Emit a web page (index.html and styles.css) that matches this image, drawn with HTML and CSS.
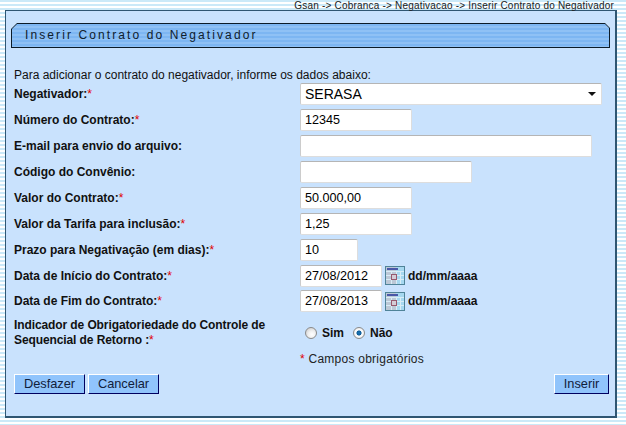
FILE: index.html
```html
<!DOCTYPE html>
<html lang="pt">
<head>
    <meta charset="UTF-8">
    <title>Inserir Contrato do Negativador</title>
    <link rel="stylesheet" href="styles.css">
</head>
<body>
<div class="trail">Gsan -&gt; Cobranca -&gt; Negativacao -&gt; Inserir Contrato do Negativador</div>
<div class="panel">
    <div class="title-bar"><div class="title-text">Inserir Contrato do Negativador</div></div>
    <p class="intro">Para adicionar o contrato do negativador, informe os dados abaixo:</p>
    <form class="form">
        <div class="row">
            <label>Negativador:<span class="req">*</span></label>
            <div class="field fake-select"><span>SERASA</span><i class="arrow"></i></div>
        </div>
        <div class="row">
            <label>Número do Contrato:<span class="req">*</span></label>
            <input class="field w112" type="text" value="12345">
        </div>
        <div class="row">
            <label>E-mail para envio do arquivo:</label>
            <input class="field w292" type="text">
        </div>
        <div class="row">
            <label>Código do Convênio:</label>
            <input class="field w172" type="text">
        </div>
        <div class="row">
            <label>Valor do Contrato:<span class="req">*</span></label>
            <input class="field w112" type="text" value="50.000,00">
        </div>
        <div class="row">
            <label>Valor da Tarifa para inclusão:<span class="req">*</span></label>
            <input class="field w112" type="text" value="1,25">
        </div>
        <div class="row">
            <label>Prazo para Negativação (em dias):<span class="req">*</span></label>
            <input class="field w58" type="text" value="10">
        </div>
        <div class="row">
            <label>Data de Início do Contrato:<span class="req">*</span></label>
            <input class="field w82" type="text" value="27/08/2012">
            <svg class="cal" width="20" height="19" viewBox="0 0 20 19">
                <rect width="20" height="19" fill="#4f8398"/>
                <rect x="1" y="1" width="18" height="17" fill="#a6d8f0"/>
                <rect x="1" y="1" width="10" height="17" fill="#bcc8d6"/>
                <rect x="2" y="2" width="11" height="2" fill="#4a58a8"/>
                <path d="M1 5.500h18M1 9.500h18M1 13.500h18M6.500 5v13M11.500 5v13M15.500 5v13" stroke="#d8edf6" fill="none"/>
                <rect x="6.500" y="8.500" width="5" height="5" fill="#d4ccd6" stroke="#96596e"/>
            </svg>
            <b class="hint">dd/mm/aaaa</b>
        </div>
        <div class="row">
            <label>Data de Fim do Contrato:<span class="req">*</span></label>
            <input class="field w82" type="text" value="27/08/2013">
            <svg class="cal" width="20" height="19" viewBox="0 0 20 19">
                <rect width="20" height="19" fill="#4f8398"/>
                <rect x="1" y="1" width="18" height="17" fill="#a6d8f0"/>
                <rect x="1" y="1" width="10" height="17" fill="#bcc8d6"/>
                <rect x="2" y="2" width="11" height="2" fill="#4a58a8"/>
                <path d="M1 5.500h18M1 9.500h18M1 13.500h18M6.500 5v13M11.500 5v13M15.500 5v13" stroke="#d8edf6" fill="none"/>
                <rect x="6.500" y="8.500" width="5" height="5" fill="#d4ccd6" stroke="#96596e"/>
            </svg>
            <b class="hint">dd/mm/aaaa</b>
        </div>
        <div class="row row-tall">
            <label>Indicador de Obrigatoriedade do Controle de Sequencial de Retorno :<span class="req">*</span></label>
            <div class="radios">
                <input type="radio" name="ind" id="sim"><label class="opt" for="sim">Sim</label>
                <input type="radio" name="ind" id="nao" checked><label class="opt" for="nao">Não</label>
            </div>
        </div>
        <div class="note"><span class="req">*</span> Campos obrigatórios</div>
        <div class="actions">
            <div class="left-btns">
                <button type="button" class="btn-wide">Desfazer</button>
                <button type="button" class="btn-wide">Cancelar</button>
            </div>
            <button type="button" class="btn-small">Inserir</button>
        </div>
    </form>
</div>
</body>
</html>
```

FILE: styles.css
```css
html, body {
    margin: 0;
    padding: 0;
}

body {
    width: 626px;
    height: 425px;
    overflow: hidden;
    font-family: "Liberation Sans", Arial, sans-serif;
    font-size: 12px;
    color: #000000;
    background: repeating-linear-gradient(to bottom, #cbe9f8 0, #cbe9f8 2px, #ffffff 2px, #ffffff 4px);
}

.trail {
    height: 10px;
    line-height: 11px;
    padding-right: 12px;
    text-align: right;
    font-size: 10px;
    letter-spacing: 0.2px;
    color: #222222;
}

.panel {
    box-sizing: border-box;
    width: 612px;
    height: 408px;
    margin-left: 5px;
    padding: 12px 5px 0 5px;
    background-color: #c9e2fd;
    border: 1px solid #2f5672;
    border-width: 1px 2px 2px 1px;
}

/* dark outer shape shows through as the border of the cut corners */
.title-bar {
    box-sizing: border-box;
    height: 25px;
    padding: 1px;
    background: #0c1c28;
    clip-path: polygon(6px 0, calc(100% - 5px) 0, 100% 5px, 100% 100%, 0 100%, 0 6px);
}

.title-text {
    height: 23px;
    line-height: 23px;
    padding-left: 13px;
    font-size: 12px;
    letter-spacing: 2.1px;
    color: #10202c;
    background: repeating-linear-gradient(to bottom, #7db6f2 0, #7db6f2 2px, #8fc1f5 2px, #8fc1f5 4px);
    clip-path: polygon(5px 0, calc(100% - 4px) 0, 100% 4px, 100% 100%, 0 100%, 0 5px);
}

.intro {
    margin: 20px 0 0 3px;
    height: 13.500px;
    line-height: 14px;
    color: #111111;
}

.form {
    margin: 0 0 0 3px;
}

.row {
    display: flex;
    align-items: center;
    height: 25.875px;
}

.row > label {
    width: 286px;
    font-weight: bold;
    color: #111111;
}

.req {
    color: #e00000;
    font-weight: normal;
}

.field {
    box-sizing: border-box;
    height: 22px;
    margin: 0;
    padding: 0 4px;
    font-family: "Liberation Sans", Arial, sans-serif;
    font-size: 12.6px;
    color: #000000;
    background: #ffffff;
    border: 1px solid #dddddd;
    border-top-color: #b5b5b5;
    border-left-color: #cccccc;
    border-radius: 2px;
}

.fake-select {
    display: flex;
    align-items: center;
    justify-content: space-between;
    width: 302px;
    padding-right: 5px;
    font-size: 14px;
}

.arrow {
    width: 0;
    height: 0;
    border-left: 4px solid transparent;
    border-right: 4px solid transparent;
    border-top: 4px solid #111111;
}

.w58 { width: 58px; }
.w82 { width: 82px; }
.w112 { width: 112px; }
.w172 { width: 172px; }
.w292 { width: 292px; }

.cal {
    margin-left: 3px;
}

.hint {
    margin-left: 3px;
    color: #111111;
}

.row-tall {
    height: 38px;
    align-items: flex-start;
    padding-top: 4px;
    box-sizing: border-box;
}

.row-tall > label {
    width: 270px;
    margin-right: 16px;
    line-height: 15px;
    letter-spacing: -0.1px;
}

.radios {
    display: flex;
    align-items: center;
    margin-top: 8px;
}

.radios input {
    appearance: none;
    box-sizing: border-box;
    width: 12px;
    height: 12px;
    margin: 0 5px 0 5px;
    border: 1px solid #8a8a8a;
    border-radius: 50%;
    background: radial-gradient(circle at 60% 65%, #ffffff 0, #f0f0f0 40%, #c4c4c4 100%);
}

.radios input:checked {
    background: radial-gradient(circle, #1c78b8 0, #0e5c98 30%, #ffffff 42%, #dcdcdc 100%);
}

.opt {
    font-weight: bold;
    color: #111111;
    margin-right: 4px;
}

.note {
    margin-left: 286px;
    height: 15px;
    line-height: 15px;
    letter-spacing: 0.25px;
    color: #222222;
}

.actions {
    display: flex;
    justify-content: space-between;
    margin-top: 6.500px;
    padding-right: 1px;
}

.left-btns {
    display: flex;
    gap: 3px;
}

button {
    box-sizing: border-box;
    height: 20px;
    padding: 0;
    font-family: "Liberation Sans", Arial, sans-serif;
    font-size: 12.8px;
    color: #10203a;
    background: #90c4fc;
    border: 1px solid #ffffff;
    border-right-color: #000060;
    border-bottom-color: #000060;
    cursor: pointer;
}

.btn-wide { width: 71px; }
.btn-small { width: 55px; }
```
